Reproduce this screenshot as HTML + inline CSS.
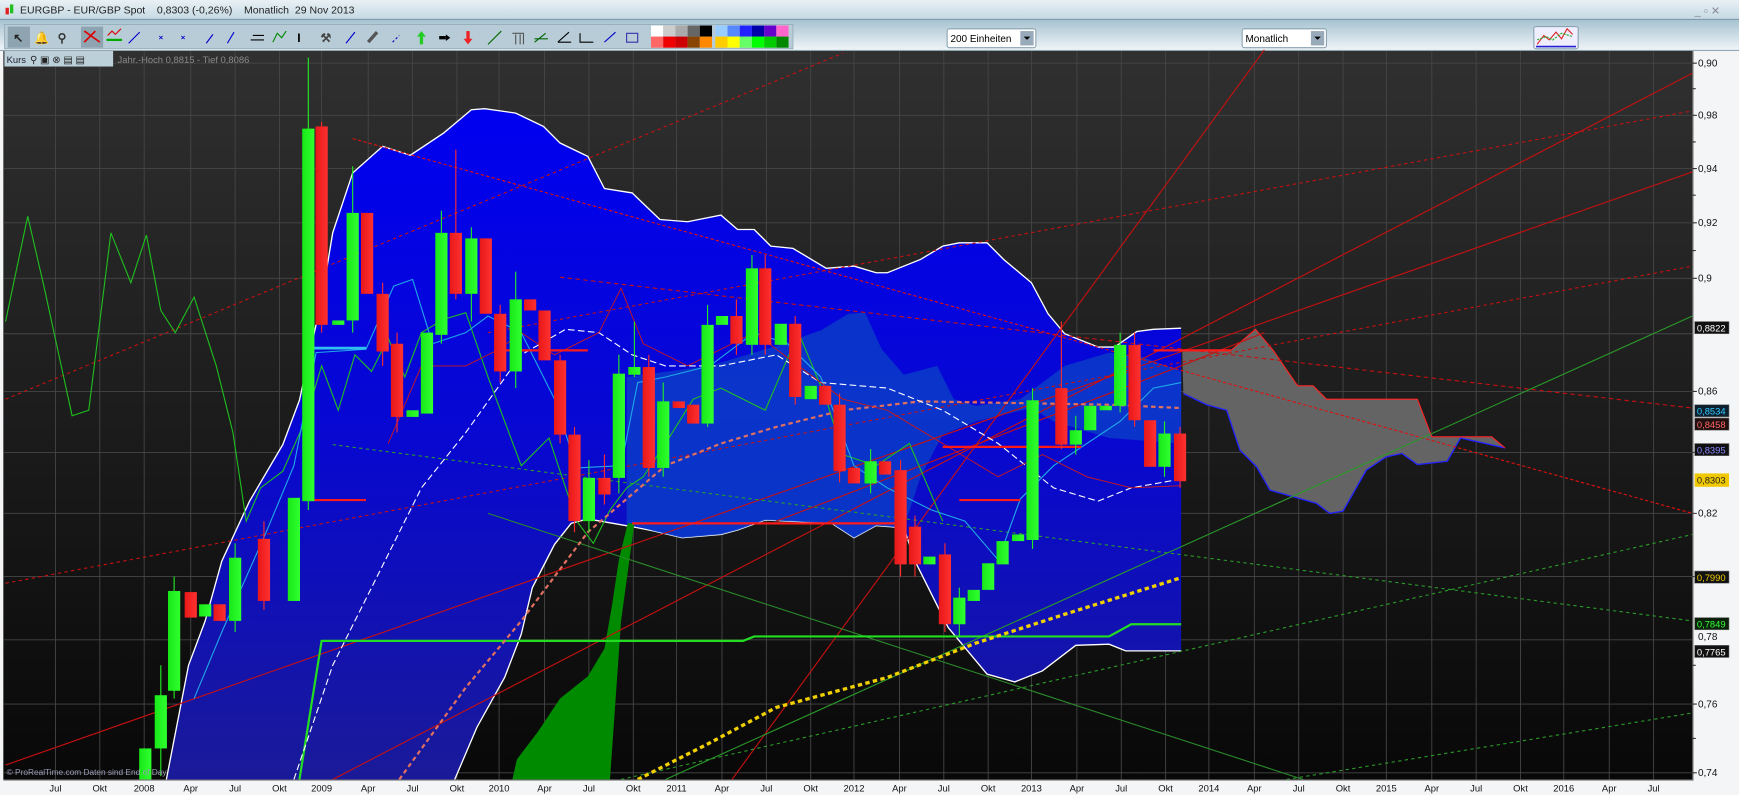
<!DOCTYPE html>
<html><head><meta charset="utf-8"><style>
html,body{margin:0;padding:0;background:#000;overflow:hidden}
svg{display:block}
text{font-family:"Liberation Sans",sans-serif}
</style></head><body>
<svg width="1739" height="795" viewBox="0 0 1568 717" preserveAspectRatio="none" xmlns="http://www.w3.org/2000/svg">
<defs>
<linearGradient id="tb" x1="0" y1="0" x2="0" y2="1"><stop offset="0" stop-color="#e9f1f5"/><stop offset="1" stop-color="#c3d8e2"/></linearGradient>
<linearGradient id="tool" x1="0" y1="0" x2="0" y2="1"><stop offset="0" stop-color="#a7c3d1"/><stop offset="1" stop-color="#f2f6f8"/></linearGradient>
<linearGradient id="bg" x1="0" y1="0" x2="0" y2="1"><stop offset="0" stop-color="#303030"/><stop offset="1" stop-color="#080808"/></linearGradient>
<linearGradient id="blue" gradientUnits="userSpaceOnUse" x1="0" y1="100" x2="0" y2="703"><stop offset="0" stop-color="#0000f0"/><stop offset="0.5" stop-color="#0808d0"/><stop offset="1" stop-color="#1a1a98"/></linearGradient>
<linearGradient id="gr" x1="0" y1="0" x2="1" y2="0"><stop offset="0" stop-color="#18e818"/><stop offset="1" stop-color="#30ff30"/></linearGradient>
<linearGradient id="rd" x1="0" y1="0" x2="1" y2="0"><stop offset="0" stop-color="#e81818"/><stop offset="1" stop-color="#ff3030"/></linearGradient>
</defs>
<rect x="0" y="0" width="1568" height="18" fill="url(#tb)"/>
<rect x="0" y="17" width="1568" height="1" fill="#7f98a6"/>
<rect x="5" y="7" width="3" height="6" fill="#e02020"/><rect x="9" y="4" width="3" height="8" fill="#20c020"/>
<text x="18" y="12" font-size="9.5" fill="#222">EURGBP - EUR/GBP Spot&#160;&#160;&#160;&#160;0,8303 (-0,26%)&#160;&#160;&#160;&#160;Monatlich&#160;&#160;29 Nov 2013</text>
<text x="1528" y="13" font-size="10" fill="#889">_ ▫ ✕</text>
<rect x="0" y="18" width="1568" height="28" fill="url(#tool)"/>
<rect x="4" y="22" width="711" height="22" fill="#b7ccd7" stroke="#8aa3b0" stroke-width="0.6"/>
<rect x="7" y="24" width="20" height="19" fill="#8ea4b0"/>
<rect x="73" y="24" width="20" height="19" fill="#8ea4b0"/>
<g font-size="11" font-weight="bold">
<text x="12" y="38" fill="#222">↖</text><text x="31" y="38" fill="#c9a000">🔔</text><text x="52" y="38" fill="#333">⚲</text>
<path d="M76 28 L90 38 M76 38 L86 28" stroke="#d00" stroke-width="1.5"/><path d="M96 36h14" stroke="#0a0" stroke-width="2"/><path d="M97 32l4-4 3 3 5-5" stroke="#d00" fill="none"/>
<path d="M116 39l10-10" stroke="#00c"/><text x="143" y="36" fill="#00c" font-size="7">×</text><text x="163" y="36" fill="#00c" font-size="7">×</text>
<path d="M186 39l6-8" stroke="#00c"/><path d="M205 39l6-10" stroke="#00c"/><path d="M226 36h12M228 32h10" stroke="#000"/><path d="M246 38l4-8 4 4 4-6" stroke="#080" fill="none"/>
<text x="268" y="38" fill="#000">I</text><text x="289" y="38" fill="#444">⚒</text><path d="M312 39l8-10" stroke="#00c"/><path d="M332 38l8-9" stroke="#555" stroke-width="3"/>
<path d="M354 38l6-6" stroke="#00c" stroke-dasharray="2 2"/><path d="M380 40v-8" stroke="#2c2" stroke-width="3"/><path d="M376 33l4-5 4 5z" fill="#2c2"/>
<path d="M396 34h6" stroke="#000" stroke-width="3"/><path d="M402 31l4 3-4 3z" fill="#000"/><path d="M422 28v8" stroke="#e22" stroke-width="3"/><path d="M418 35l4 5 4-5z" fill="#e22"/>
<path d="M440 40l12-12" stroke="#060"/><path d="M462 30h10v10M465 31v9M469 31v9" stroke="#555" fill="none"/><path d="M482 38l10-8M482 35h12" stroke="#060"/>
<path d="M503 38l10-9M503 38h12" stroke="#000"/><path d="M523 30v8h12" stroke="#000" fill="none"/><path d="M545 38l10-9" stroke="#00c"/><path d="M565 30h10v8h-10z" stroke="#33a" fill="none"/>
</g>
<g>
<rect x="587" y="23" width="11" height="10" fill="#fff"/><rect x="598" y="23" width="11" height="10" fill="#ccc"/><rect x="609" y="23" width="11" height="10" fill="#aaa"/><rect x="620" y="23" width="11" height="10" fill="#666"/><rect x="631" y="23" width="11" height="10" fill="#000"/>
<rect x="645" y="23" width="11" height="10" fill="#9cf"/><rect x="656" y="23" width="11" height="10" fill="#58f"/><rect x="667" y="23" width="11" height="10" fill="#22f"/><rect x="678" y="23" width="11" height="10" fill="#00a"/><rect x="689" y="23" width="11" height="10" fill="#60c"/><rect x="700" y="23" width="11" height="10" fill="#f6c"/>
<rect x="587" y="33" width="11" height="10" fill="#f66"/><rect x="598" y="33" width="11" height="10" fill="#e00"/><rect x="609" y="33" width="11" height="10" fill="#c00"/><rect x="620" y="33" width="11" height="10" fill="#840"/><rect x="631" y="33" width="11" height="10" fill="#f80"/>
<rect x="645" y="33" width="11" height="10" fill="#fc0"/><rect x="656" y="33" width="11" height="10" fill="#ff0"/><rect x="667" y="33" width="11" height="10" fill="#6f6"/><rect x="678" y="33" width="11" height="10" fill="#0f0"/><rect x="689" y="33" width="11" height="10" fill="#0c0"/><rect x="700" y="33" width="11" height="10" fill="#080"/>
</g>
<rect x="854" y="26" width="80" height="17" rx="2" fill="#fff" stroke="#8aa3b0"/><rect x="920" y="28" width="12" height="13" fill="#9ab"/><path d="M923 33h6l-3 3z" fill="#000"/>
<text x="857" y="38" font-size="9" fill="#000">200 Einheiten</text>
<rect x="1120" y="26" width="76" height="17" rx="2" fill="#fff" stroke="#8aa3b0"/><rect x="1182" y="28" width="12" height="13" fill="#9ab"/><path d="M1185 33h6l-3 3z" fill="#000"/>
<text x="1123" y="38" font-size="9" fill="#000">Monatlich</text>
<rect x="1383" y="24" width="40" height="20" rx="2" fill="#eef" stroke="#8aa3b0"/><path d="M1386 40l6-8 5 4 6-7 5 6 5-9 5 5" stroke="#d22" fill="none"/><path d="M1386 36l8-3 6 3 8-6 10 3" stroke="#2a2" fill="none" stroke-dasharray="2 1"/><path d="M1385 42h36" stroke="#22c" stroke-width="1.5"/>
<rect x="0" y="45" width="1568" height="1" fill="#8fa6b3"/>
<rect x="0" y="46" width="1568" height="671" fill="#f4f5f6"/>
<rect x="3" y="46" width="1523" height="657" fill="url(#bg)"/>
<g stroke="#464646" stroke-width="0.8">
<path d="M3 57H1526M3 104H1526M3 152H1526M3 201H1526M3 251H1526M3 301H1526M3 353H1526M3 408H1526M3 463H1526M3 520H1526M3 577H1526M3 635H1526M3 697H1526"/>
<path d="M50 46V703M90 46V703M130 46V703M172 46V703M212 46V703M252 46V703M290 46V703M332 46V703M372 46V703M412 46V703M450 46V703M491 46V703M531 46V703M571 46V703M610 46V703M651 46V703M691 46V703M731 46V703M770 46V703M811 46V703M851 46V703M891 46V703M930 46V703M971 46V703M1011 46V703M1051 46V703M1090 46V703M1131 46V703M1171 46V703M1211 46V703M1250 46V703M1291 46V703M1331 46V703M1371 46V703M1410 46V703M1451 46V703M1491 46V703"/>
</g>
<path fill="url(#blue)" d="M150 703 L170 600 L185 560 L200 506 L225 452 L255 401 L270 361 L290 270 L300 210 L318 156 L345 132 L370 140 L400 120 L425 99 L437 98 L465 102 L490 114 L505 129 L530 141 L545 170 L570 174 L595 198 L620 200 L650 194 L665 207 L680 207 L695 222 L715 224 L745 242 L770 240 L790 246 L800 246 L830 234 L850 222 L865 219 L890 219 L905 234 L930 255 L945 283 L960 301 L990 313 L1005 313 L1025 299 L1040 297 L1065 296 L1065 587 L1015 587 L1000 581 L970 582 L940 605 L915 615 L890 608 L870 584 L855 566 L840 536 L825 506 L815 476 L790 474 L770 485 L750 472 L690 469 L665 478 L650 482 L615 485 L590 479 L570 475 L530 468 L515 472 L500 491 L480 530 L470 572 L455 611 L430 656 L410 703 Z"/>
<path fill="none" stroke="#fff" stroke-width="1.2" d="M150 703 L170 600 L185 560 L200 506 L225 452 L255 401 L270 361 L290 270 L300 210 L318 156 L345 132 L370 140 L400 120 L425 99 L437 98 L465 102 L490 114 L505 129 L530 141 L545 170 L570 174 L595 198 L620 200 L650 194 L665 207 L680 207 L695 222 L715 224 L745 242 L770 240 L790 246 L800 246 L830 234 L850 222 L865 219 L890 219 L905 234 L930 255 L945 283 L960 301 L990 313 L1005 313 L1025 299 L1040 297 L1065 296"/>
<path fill="none" stroke="#fff" stroke-width="1.2" d="M1065 587 L1015 587 L1000 581 L970 582 L940 605 L915 615 L890 608 L870 584 L855 566 L840 536 L825 506 L815 476 L790 474 L770 485 L750 472 L690 469 L665 478 L650 482 L615 485 L590 479 L570 475 L530 468 L515 472 L500 491 L480 530 L470 572 L455 611 L430 656 L410 703"/>
<path fill="#0a3cc8" opacity="0.85" d="M565 472 L565 340 L640 330 L700 312 L740 298 L765 283 L780 282 L795 315 L815 338 L845 330 L860 360 L880 366 L920 360 L960 330 L1000 318 L1030 322 L1065 335 L1065 400 L1000 395 L950 380 L930 368 L880 380 L850 392 L830 430 L815 476 L790 474 L770 485 L750 472 L690 469 L665 478 L650 482 L615 485 L590 479 Z"/>
<path fill="#646464" d="M1066 316 L1110 316 L1132 297 L1148 316 L1170 348 L1184 348 L1196 360 L1278 360 L1291 394 L1345 394 L1357 404 L1317 395 L1305 416 L1278 419 L1264 409 L1250 412 L1232 424 L1211 461 L1199 463 L1187 454 L1145 442 L1133 421 L1118 406 L1106 370 L1088 365 L1067 355 Z"/>
<path fill="none" stroke="#22f" stroke-width="1.2" d="M1357 404 L1317 395 L1305 416 L1278 419 L1264 409 L1250 412 L1232 424 L1211 461 L1199 463 L1187 454 L1145 442 L1133 421 L1118 406 L1106 370 L1088 365 L1067 355"/>
<path fill="none" stroke="#f22" stroke-width="1" d="M1110 316 L1132 297 L1148 316 L1170 348 L1184 348 L1196 360 L1278 360 L1291 394 L1345 394 L1357 404"/>
<path fill="#008a00" d="M462 703 L466 685 L485 660 L505 630 L530 610 L545 585 L552 545 L558 505 L566 472 L572 472 L560 560 L550 703 Z"/>
<g fill="none" stroke="#c81010" stroke-width="1">
<path d="M5 360 L760 48" stroke-dasharray="3 3"/>
<path d="M5 526 L1526 240" stroke-dasharray="3 3"/>
<path d="M318 125 L1526 463" stroke-dasharray="3 2" stroke="#e01010"/>
<path d="M505 250 L1526 368" stroke-dasharray="4 3"/>
<path d="M440 300 L1526 100" stroke-dasharray="3 3"/>
<path d="M1140 45 L660 703"/>
<path d="M5 690 L1526 155"/>
<path d="M300 703 L1526 66"/>
<path d="M700 470 L1065 330 L1140 300"/>
</g>
<g fill="none" stroke-width="1">
<path d="M300 401 L1526 560" stroke="#2a9a2a" stroke-dasharray="3 3"/>
<path d="M440 463 L1175 703" stroke="#2a8a2a"/>
<path d="M600 703 L1526 285" stroke="#2a9a2a"/>
<path d="M560 703 L1526 482" stroke="#2a9a2a" stroke-dasharray="3 3"/>
<path d="M1160 703 L1526 643" stroke="#2a9a2a" stroke-dasharray="3 3"/>
<path d="M5 290 L25 195 L40 260 L65 375 L80 370 L100 210 L118 255 L132 212 L145 280 L158 300 L175 268 L195 330 L210 390 L222 470 L235 440 L255 425 L275 380 L290 330 L305 370 L320 320 L335 335 L350 305 L365 340 L380 300 L400 288 L420 282 L440 340 L470 420 L495 395 L520 470 L535 490 L550 460 L565 440 L580 430 L600 400 L625 360 L650 350 L690 370 L720 300 L745 360 L760 410 L790 420 L820 400 L850 470" stroke="#1fbf1f"/>
<path d="M270 703 L290 578 L670 578 L680 574 L1000 574 L1020 563 L1065 563" stroke="#22dd22" stroke-width="2"/>
</g>
<path d="M575 703 L640 670 L700 638 L800 611 L880 580 L960 554 L1065 521" fill="none" stroke="#f0d000" stroke-width="3" stroke-dasharray="4 3"/>
<path d="M360 703 L420 620 L470 560 L530 480 L600 420 L650 400 L700 385 L760 370 L830 362 L1000 365 L1065 368" fill="none" stroke="#e07060" stroke-width="2" stroke-dasharray="4 3"/>
<path d="M265 703 L300 600 L330 540 L380 440 L420 390 L470 320 L510 297 L540 300 L570 320 L600 330 L650 330 L700 320 L740 345 L800 350 L850 370 L900 400 L950 440 L990 452 L1020 440 L1065 432" fill="none" stroke="#fff" stroke-width="1" stroke-dasharray="6 3"/>
<path d="M175 630 L200 570 L240 480 L265 420 L285 318 L330 315 L355 258 L372 252 L390 310 L420 300 L440 285 L470 300 L500 360 L520 422 L560 420 L575 345 L600 340 L640 330 L680 300 L710 310 L740 340 L770 420 L800 440 L840 460 L870 470 L900 505 L920 450 L950 420 L980 400 L1010 380 L1040 350 L1065 345" fill="none" stroke="#20a8e8" stroke-width="1"/>
<path d="M278 314 L330 314" stroke="#30c0f0" stroke-width="2.5"/>
<path d="M350 400 L380 330 L420 330 L450 315 L470 300 L500 320 L540 300 L560 260 L580 310 L620 330 L680 300 L720 330 L760 360 L800 370 L850 400 L900 430 L940 410 L980 430 L1020 440 L1065 438" fill="none" stroke="#d01818" stroke-width="0.8"/>
<g stroke="#ff1a1a" stroke-width="2">
<path d="M278 451H330"/><path d="M455 316H530"/><path d="M570 472H815"/><path d="M850 403H975"/><path d="M865 451H920"/><path d="M1040 316H1110"/>
</g>
<g stroke="#22ee22" stroke-width="1">
<path d="M278 52V460"/><path d="M318 150V300"/><path d="M398 190V310"/><path d="M425 205V290"/><path d="M465 245V350"/><path d="M531 415V480"/><path d="M558 320V445"/><path d="M572 290V340"/><path d="M598 345V430"/><path d="M638 275V385"/><path d="M678 230V320"/><path d="M785 405V445"/><path d="M865 530V575"/><path d="M931 350V495"/><path d="M970 375V410"/><path d="M1010 300V372"/><path d="M1050 380V430"/><path d="M145 600V700"/><path d="M157 520V630"/><path d="M212 490V570"/>
</g>
<g stroke="#ff2a2a" stroke-width="1">
<path d="M290 110V300"/><path d="M345 255V330"/><path d="M358 300V390"/><path d="M411 135V270"/><path d="M451 275V345"/><path d="M505 320V400"/><path d="M518 385V480"/><path d="M545 410V455"/><path d="M585 320V430"/><path d="M664 270V320"/><path d="M690 230V320"/><path d="M717 285V365"/><path d="M757 355V435"/><path d="M812 415V520"/><path d="M825 465V520"/><path d="M852 490V570"/><path d="M957 290V405"/><path d="M1023 300V385"/><path d="M1064 385V440"/><path d="M238 470V550"/>
</g>
<g fill="url(#gr)">
<rect x="125.5" y="675" width="11" height="28"/><rect x="139.5" y="627" width="11" height="48"/><rect x="151.5" y="533" width="11" height="90"/><rect x="179.5" y="545" width="11" height="11"/><rect x="206.5" y="503" width="11" height="57"/><rect x="259.5" y="449" width="11" height="93"/>
<rect x="272.5" y="116" width="11" height="336"/><rect x="299.5" y="289" width="11" height="4"/><rect x="312.5" y="192" width="11" height="97"/><rect x="366.5" y="370" width="11" height="6"/><rect x="379.5" y="300" width="11" height="73"/><rect x="392.5" y="210" width="11" height="92"/><rect x="419.5" y="215" width="11" height="50"/><rect x="459.5" y="270" width="11" height="65"/>
<rect x="525.5" y="431" width="11" height="39"/><rect x="552.5" y="337" width="11" height="94"/><rect x="566.5" y="331" width="11" height="7"/><rect x="592.5" y="362" width="11" height="60"/><rect x="632.5" y="293" width="11" height="89"/><rect x="645.5" y="285" width="11" height="8"/><rect x="672.5" y="242" width="11" height="69"/><rect x="698.5" y="292" width="11" height="19"/><rect x="725.5" y="348" width="11" height="12"/>
<rect x="779.5" y="416" width="11" height="20"/><rect x="832.5" y="502" width="11" height="7"/><rect x="859.5" y="539" width="11" height="24"/><rect x="872.5" y="532" width="11" height="10"/><rect x="885.5" y="508" width="11" height="24"/><rect x="898.5" y="488" width="11" height="21"/><rect x="912.5" y="482" width="11" height="6"/><rect x="925.5" y="361" width="11" height="126"/>
<rect x="964.5" y="388" width="11" height="13"/><rect x="977.5" y="366" width="11" height="22"/><rect x="991.5" y="366" width="11" height="4"/><rect x="1004.5" y="311" width="11" height="55"/><rect x="1044.5" y="391" width="11" height="30"/>
</g>
<g fill="url(#rd)">
<rect x="166.5" y="534" width="11" height="23"/><rect x="192.5" y="545" width="11" height="15"/><rect x="232.5" y="486" width="11" height="56"/>
<rect x="284.5" y="114" width="11" height="179"/><rect x="325.5" y="192" width="11" height="73"/><rect x="339.5" y="265" width="11" height="52"/><rect x="352.5" y="310" width="11" height="66"/><rect x="405.5" y="210" width="11" height="55"/><rect x="432.5" y="215" width="11" height="68"/><rect x="445.5" y="283" width="11" height="52"/><rect x="472.5" y="270" width="11" height="10"/><rect x="485.5" y="280" width="11" height="45"/><rect x="499.5" y="325" width="11" height="67"/><rect x="512.5" y="392" width="11" height="78"/><rect x="539.5" y="431" width="11" height="15"/>
<rect x="579.5" y="331" width="11" height="91"/><rect x="606.5" y="362" width="11" height="6"/><rect x="619.5" y="365" width="11" height="17"/><rect x="658.5" y="285" width="11" height="25"/><rect x="684.5" y="242" width="11" height="69"/><rect x="711.5" y="292" width="11" height="66"/><rect x="738.5" y="348" width="11" height="17"/><rect x="751.5" y="365" width="11" height="60"/><rect x="764.5" y="422" width="11" height="14"/><rect x="792.5" y="416" width="11" height="12"/><rect x="806.5" y="424" width="11" height="85"/><rect x="819.5" y="475" width="11" height="34"/><rect x="846.5" y="500" width="11" height="63"/>
<rect x="951.5" y="350" width="11" height="51"/><rect x="1017.5" y="311" width="11" height="68"/><rect x="1031.5" y="379" width="11" height="42"/><rect x="1058.5" y="391" width="11" height="43"/>
</g>
<rect x="4" y="46" width="98" height="14" fill="#bcd0da"/>
<text x="6" y="57" font-size="8.5" fill="#223">Kurs</text>
<text x="27" y="57" font-size="9" fill="#222">⚲ ▣ ⊗ ▤ ▤</text>
<text x="106" y="57" font-size="8.5" fill="#8a8a8a">Jahr.-Hoch 0,8815 - Tief 0,8086</text>
<text x="6" y="699" font-size="7.5" fill="#9a9ab8">© ProRealTime.com  Daten sind End of Day</text>
<rect x="1526" y="46" width="1" height="658" fill="#777"/>
<g font-size="9" fill="#111">
<text x="1531" y="60">0,90</text><text x="1531" y="107">0,98</text><text x="1531" y="155">0,94</text><text x="1531" y="204">0,92</text><text x="1531" y="254">0,9</text><text x="1531" y="356">0,86</text><text x="1531" y="466">0,82</text><text x="1531" y="577">0,78</text><text x="1531" y="638">0,76</text><text x="1531" y="700">0,74</text>
</g>
<g stroke="#333" stroke-width="1"><path d="M1526 57h4M1526 104h4M1526 152h4M1526 201h4M1526 251h4M1526 353h4M1526 463h4M1526 635h4M1526 697h4M1526 80h3M1526 128h3M1526 176h3M1526 226h3M1526 408h3M1526 520h3M1526 600h3M1526 666h3"/></g>
<g font-size="8.5">
<rect x="1528" y="290" width="31" height="11" fill="#111" stroke="#777" stroke-width="0.5"/><text x="1530" y="299" fill="#fff">0,8822</text>
<rect x="1528" y="365" width="31" height="11" fill="#0c2030" stroke="#777" stroke-width="0.5"/><text x="1530" y="374" fill="#3cf">0,8534</text>
<rect x="1528" y="377" width="31" height="11" fill="#201010" stroke="#777" stroke-width="0.5"/><text x="1530" y="386" fill="#f66">0,8458</text>
<rect x="1528" y="400" width="31" height="11" fill="#111" stroke="#777" stroke-width="0.5"/><text x="1530" y="409" fill="#88f">0,8395</text>
<rect x="1528" y="427" width="31" height="12" fill="#f0c800"/><text x="1530" y="436" fill="#222">0,8303</text>
<rect x="1528" y="515" width="31" height="11" fill="#111" stroke="#777" stroke-width="0.5"/><text x="1530" y="524" fill="#ec0">0,7990</text>
<rect x="1528" y="557" width="31" height="11" fill="#0a200a" stroke="#777" stroke-width="0.5"/><text x="1530" y="566" fill="#3f3">0,7849</text>
<rect x="1528" y="582" width="31" height="11" fill="#111" stroke="#777" stroke-width="0.5"/><text x="1530" y="591" fill="#fff">0,7765</text>
</g>
<rect x="3" y="703" width="1524" height="1" fill="#777"/>
<g font-size="8.5" fill="#111" text-anchor="middle">
<text x="50" y="714">Jul</text><text x="90" y="714">Okt</text><text x="130" y="714">2008</text><text x="172" y="714">Apr</text><text x="212" y="714">Jul</text><text x="252" y="714">Okt</text><text x="290" y="714">2009</text><text x="332" y="714">Apr</text><text x="372" y="714">Jul</text><text x="412" y="714">Okt</text><text x="450" y="714">2010</text><text x="491" y="714">Apr</text><text x="531" y="714">Jul</text><text x="571" y="714">Okt</text><text x="610" y="714">2011</text><text x="651" y="714">Apr</text><text x="691" y="714">Jul</text><text x="731" y="714">Okt</text><text x="770" y="714">2012</text><text x="811" y="714">Apr</text><text x="851" y="714">Jul</text><text x="891" y="714">Okt</text><text x="930" y="714">2013</text><text x="971" y="714">Apr</text><text x="1011" y="714">Jul</text><text x="1051" y="714">Okt</text><text x="1090" y="714">2014</text><text x="1131" y="714">Apr</text><text x="1171" y="714">Jul</text><text x="1211" y="714">Okt</text><text x="1250" y="714">2015</text><text x="1291" y="714">Apr</text><text x="1331" y="714">Jul</text><text x="1371" y="714">Okt</text><text x="1410" y="714">2016</text><text x="1451" y="714">Apr</text><text x="1491" y="714">Jul</text>
</g>
</svg>
</body></html>
